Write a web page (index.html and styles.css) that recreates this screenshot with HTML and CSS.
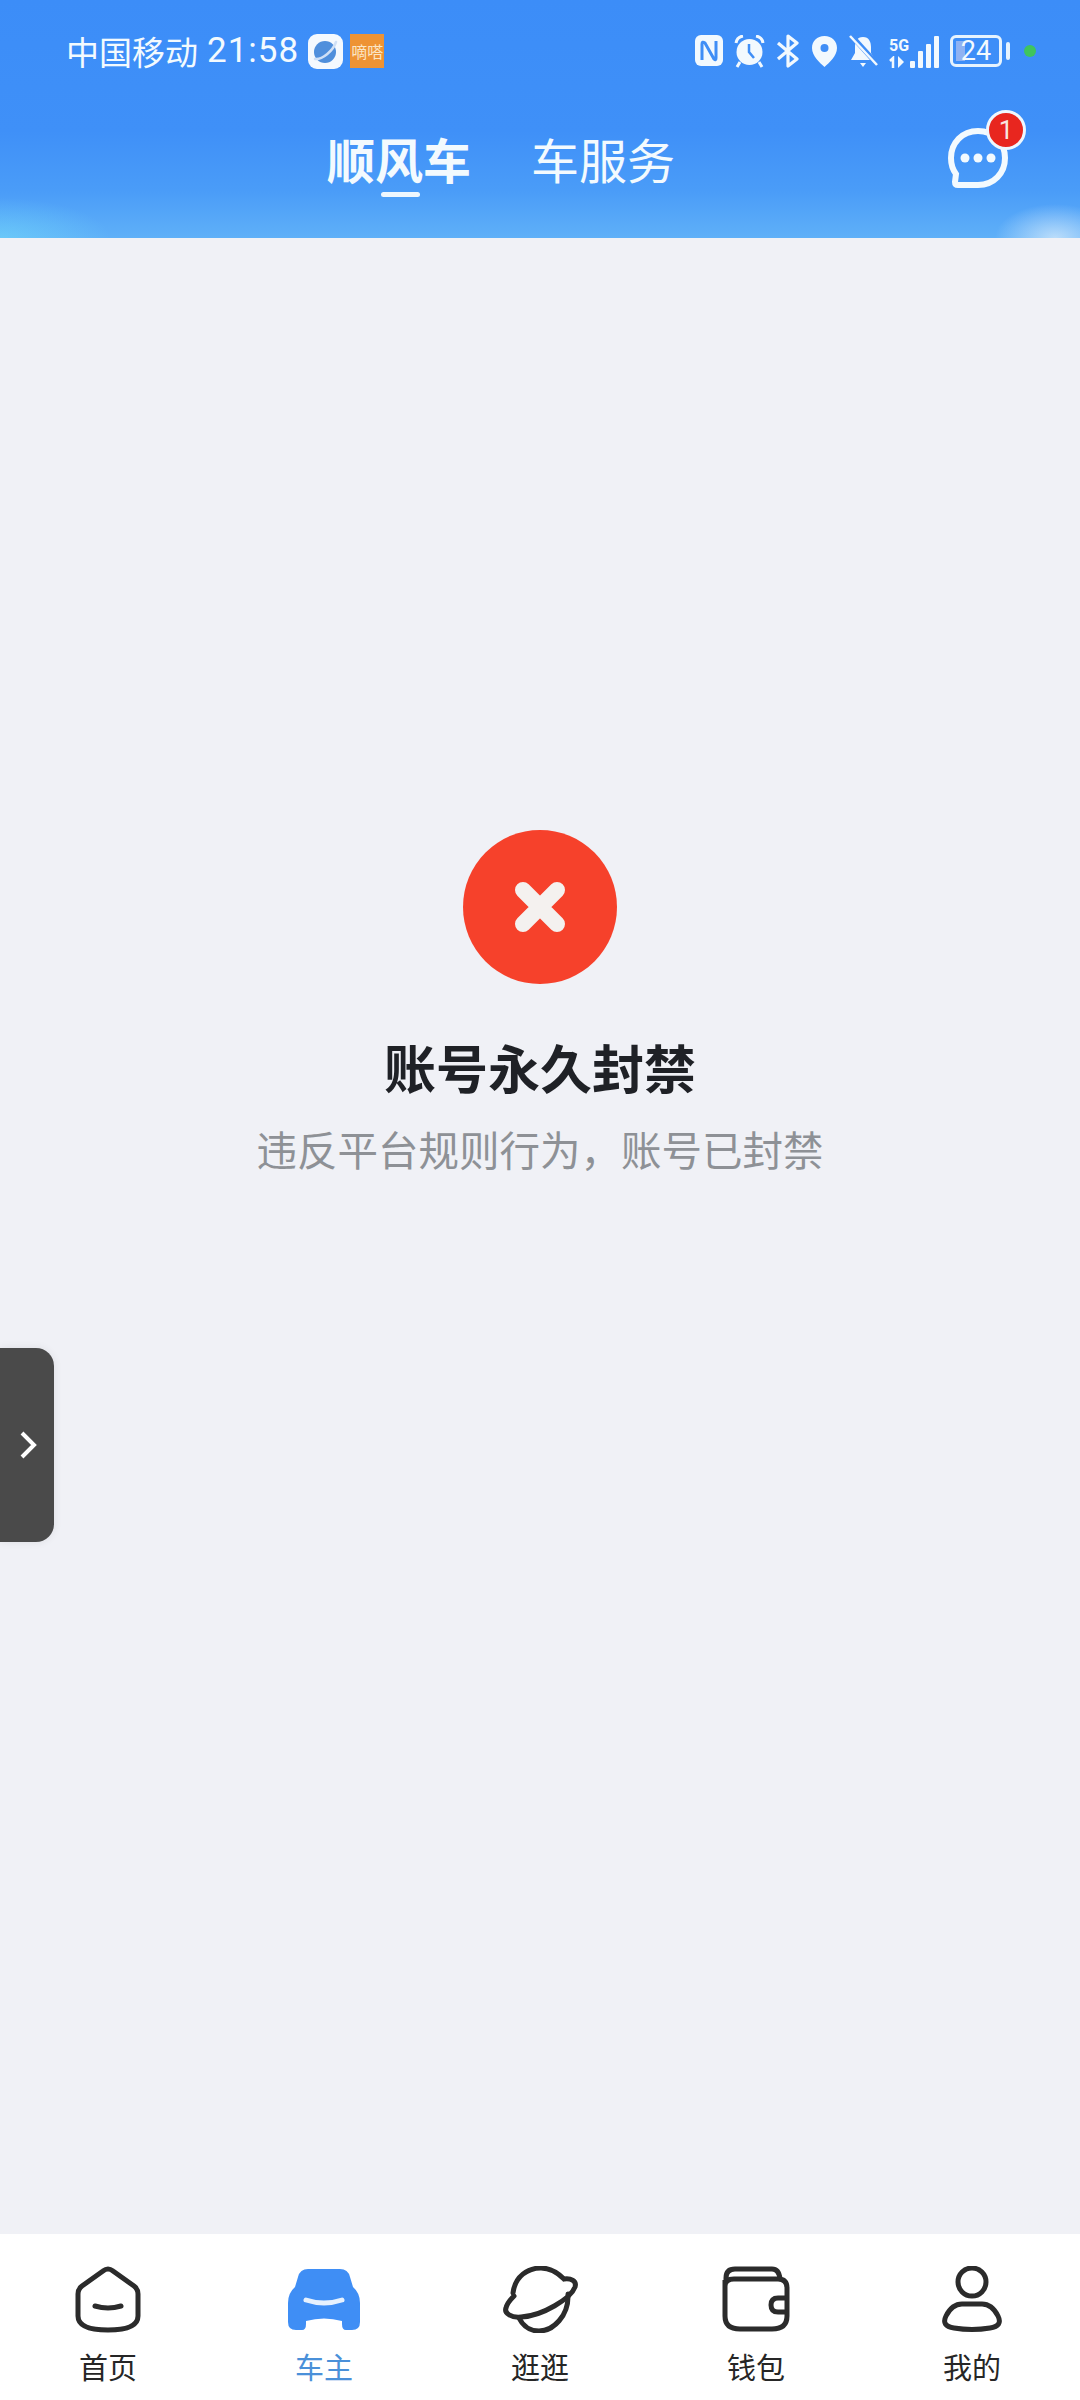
FILE: index.html
```html
<!DOCTYPE html>
<html lang="zh-CN">
<head>
    <meta charset="UTF-8">
    <title>账号永久封禁</title>
    <link rel="stylesheet" href="styles.css">
</head>
<body>
<div class="app">

    <!-- Header with status bar and tabs -->
    <header class="top">
        <div class="status-bar">
            <div class="status-left">
                <span class="carrier">中国移动</span>
                <span class="clock">21:58</span>
                <svg class="app-planet" width="35" height="35" viewBox="0 0 35 35">
                    <rect width="35" height="35" rx="9" fill="#f4f9fe"/>
                    <circle cx="17" cy="18" r="11" fill="#4f8fdc"/>
                    <path d="M7 25 C14 26 25 17 28 8" fill="none" stroke="#cfe0f6" stroke-width="2.5" stroke-linecap="round"/>
                </svg>
                <span class="app-dida">嘀嗒</span>
            </div>
            <div class="status-right">
                <svg width="28" height="32" viewBox="0 0 28 32">
                    <rect width="28" height="31" rx="6" fill="#f2f9fe"/>
                    <path d="M7 25 V9 Q7 6 10 8 L19 24 Q21 26 21 23 V6" fill="none" stroke="#3f8ef6" stroke-width="3"/>
                </svg>
                <svg width="31" height="33" viewBox="0 0 31 33">
                    <circle cx="15.500" cy="17" r="13" fill="#f2f9fe"/>
                    <path d="M2 8 Q3 2 9 1 M29 8 Q28 2 22 1 M6 27 L3 32 M25 27 L28 32" fill="none" stroke="#f2f9fe" stroke-width="3"/>
                    <path d="M15 9 V17 L20 23" fill="none" stroke="#3f8ef6" stroke-width="2.500"/>
                </svg>
                <svg width="24" height="34" viewBox="0 0 24 34">
                    <path d="M2 9 L21 25 L12 32 V2 L21 9 L2 25" fill="none" stroke="#f2f9fe" stroke-width="3.200" stroke-linejoin="round"/>
                </svg>
                <svg width="27" height="32" viewBox="0 0 27 32">
                    <path d="M13.500 1 C6 1 1 6 1 13 C1 21 9 28 13.500 32 C18 28 26 21 26 13 C26 6 21 1 13.500 1Z" fill="#f2f9fe"/>
                    <circle cx="13.500" cy="13" r="4" fill="#3f8ef6"/>
                </svg>
                <svg width="29" height="34" viewBox="0 0 29 34">
                    <path d="M14 3 C8 3 6 8 6 13 V19 L2 26 H26 L22 19 V13 C22 8 20 3 14 3Z" fill="#f2f9fe"/>
                    <path d="M11 29 H17 L14 33Z" fill="#f2f9fe"/>
                    <path d="M1 0 L28 30" stroke="#3f8ef6" stroke-width="5"/>
                    <path d="M1 2 L28 31" stroke="#f2f9fe" stroke-width="2.500"/>
                </svg>
                <div class="signal">
                    <div class="net">
                        <span class="net-label">5G</span>
                        <svg width="18" height="12" viewBox="0 0 18 12">
                            <path d="M4 12 V2 L1 5" fill="none" stroke="#f2f9fe" stroke-width="2.500"/>
                            <path d="M9 0 L15 6 L9 12Z" fill="#f2f9fe"/>
                        </svg>
                    </div>
                    <div class="bars">
                        <i class="bar b1"></i><i class="bar b2"></i><i class="bar b3"></i><i class="bar b4"></i>
                    </div>
                </div>
                <div class="battery">
                    <div class="battery-body">
                        <i class="battery-fill"></i>
                        <span class="battery-num">24</span>
                    </div>
                    <i class="battery-nub"></i>
                </div>
                <i class="green-dot"></i>
            </div>
        </div>

        <div class="nav-row">
            <div class="tab tab-active">顺风车</div>
            <div class="tab">车服务</div>
            <div class="msg">
                <svg width="60" height="60" viewBox="0 0 60 60">
                    <path d="M30 3 C14 3 3 15 3 30 C3 37 5 42 8 46 L7 54 Q7 57 10 57 H30 C46 57 57 45 57 30 C57 15 46 3 30 3Z" fill="none" stroke="#f3fafe" stroke-width="6"/>
                    <circle cx="17" cy="30" r="4.500" fill="#f3fafe"/>
                    <circle cx="30" cy="30" r="4.500" fill="#f3fafe"/>
                    <circle cx="43" cy="30" r="4.500" fill="#f3fafe"/>
                </svg>
                <span class="badge">1</span>
            </div>
        </div>
    </header>

    <!-- Banned notice -->
    <main class="content">
        <svg class="ban-icon" width="154" height="154" viewBox="0 0 154 154">
            <circle cx="77" cy="77" r="77" fill="#f6412b"/>
            <path d="M60 60 L94 94 M94 60 L60 94" stroke="#f4f1ef" stroke-width="16" stroke-linecap="round"/>
        </svg>
        <h1 class="ban-title">账号永久封禁</h1>
        <p class="ban-desc">违反平台规则行为，账号已封禁</p>
    </main>

    <!-- Floating side handle -->
    <div class="side-handle">
        <svg width="18" height="30" viewBox="0 0 18 30">
            <path d="M3 3 L15 15 L3 27" fill="none" stroke="#fff" stroke-width="4"/>
        </svg>
    </div>

    <!-- Bottom navigation -->
    <nav class="bottom-nav">
        <div class="nav-item">
            <svg width="66" height="67" viewBox="0 0 66 67">
                <path d="M28 5 L7 20 Q3 23 3 28 V50 Q3 64 33 64 Q63 64 63 50 V28 Q63 23 59 20 L38 5 Q33 1 28 5Z" fill="none" stroke="#2b2b2b" stroke-width="5"/>
                <path d="M20 40 Q33 44 46 40" fill="none" stroke="#2b2b2b" stroke-width="5" stroke-linecap="round"/>
            </svg>
            <span>首页</span>
        </div>
        <div class="nav-item nav-active">
            <svg width="72" height="67" viewBox="0 -3 72 67">
                <path d="M20 0 H52 Q60 0 62 8 L65 18 Q72 24 72 34 V53 Q72 61 64 61 H58 Q54 61 54 55 V52 Q36 47 18 52 V55 Q18 61 14 61 H8 Q0 61 0 53 V34 Q0 24 7 18 L10 8 Q12 0 20 0Z" fill="#3f8ef5"/>
                <path d="M18 31 Q36 37 54 31" fill="none" stroke="#e6f1fe" stroke-width="5" stroke-linecap="round"/>
            </svg>
            <span>车主</span>
        </div>
        <div class="nav-item">
            <svg width="75" height="67" viewBox="0 0 75 67">
                <path d="M10 27 C12 10 25 2 38 2 C47 2 55 7 61 13 C68 12 74 15 72 21 C68 32 40 50 18 51 C8 52 1 47 3 42 C4 37 8 33 11 30" fill="none" stroke="#2b2b2b" stroke-width="5" stroke-linecap="round"/>
                <path d="M65 28 C66 50 50 65 36 65 C27 65 20 60 16 52" fill="none" stroke="#2b2b2b" stroke-width="5" stroke-linecap="round"/>
            </svg>
            <span>逛逛</span>
        </div>
        <div class="nav-item">
            <svg width="68" height="67" viewBox="0 0 68 67">
                <path d="M4 16 V12 Q4 3 13 3 H50 Q57 3 58 13" fill="none" stroke="#2b2b2b" stroke-width="5"/>
                <path d="M3 14 V50 Q3 63 18 63 H50 Q65 63 65 50 V22 Q65 13 56 13 H12 Q3 13 3 20" fill="none" stroke="#2b2b2b" stroke-width="5"/>
                <path d="M65 32 H56 Q49 32 49 39 Q49 46 56 46 H65" fill="none" stroke="#2b2b2b" stroke-width="5"/>
            </svg>
            <span>钱包</span>
        </div>
        <div class="nav-item">
            <svg width="64" height="67" viewBox="0 0 64 67">
                <circle cx="32" cy="16" r="14" fill="none" stroke="#2b2b2b" stroke-width="5"/>
                <path d="M22 38 H42 Q52 38 58 50 Q63 60 50 62 Q32 65 14 62 Q1 60 6 50 Q12 38 22 38Z" fill="none" stroke="#2b2b2b" stroke-width="5"/>
            </svg>
            <span>我的</span>
        </div>
    </nav>

</div>
</body>
</html>
```

FILE: styles.css
```css
/* Global Styles */
* {
    margin: 0;
    padding: 0;
    box-sizing: border-box;
}

body {
    font-family: "Noto Sans CJK SC", "Noto Sans", sans-serif;
    background-color: #f0f1f6;
}

.app {
    position: relative;
    display: flex;
    flex-direction: column;
    width: 1080px;
    height: 2400px;
    overflow: hidden;
}

svg {
    display: block;
    flex-shrink: 0;
}

/* Header */
.top {
    height: 238px;
    padding-top: 34px;
    color: #f3fafe;
    background:
        radial-gradient(ellipse 110px 40px at 0 100%, rgba(120, 230, 250, 0.45), transparent),
        radial-gradient(ellipse 60px 34px at 1055px 100%, rgba(225, 240, 252, 0.7), transparent),
        linear-gradient(#3c8df8 0, #3f90f8 55%, #4a9cf8 80%, #5fb0f8 100%);
}

.status-bar {
    display: flex;
    justify-content: space-between;
    align-items: center;
    height: 34px;
    padding: 0 44px 0 66px;
}

.status-left {
    display: flex;
    align-items: center;
}

.carrier {
    font-size: 33px;
    line-height: 34px;
}

.clock {
    margin-left: 9px;
    font-family: "Roboto", sans-serif;
    font-size: 35px;
    line-height: 34px;
    letter-spacing: 1px;
}

.app-planet {
    margin-left: 9px;
}

.app-dida {
    width: 34px;
    height: 34px;
    margin-left: 7px;
    background-color: #ee9334;
    color: #fbe6c6;
    font-size: 16px;
    line-height: 34px;
    text-align: center;
    white-space: nowrap;
}

.status-right {
    display: flex;
    align-items: center;
    gap: 11px;
}

.signal {
    display: flex;
    align-items: flex-end;
    gap: 3px;
    height: 34px;
}

.net {
    display: flex;
    flex-direction: column;
    justify-content: flex-end;
    gap: 2px;
    width: 18px;
}

.net-label {
    font-family: "Roboto", sans-serif;
    font-size: 16px;
    font-weight: 700;
    line-height: 16px;
}

.bars {
    display: flex;
    align-items: flex-end;
    gap: 3px;
}

.bar {
    display: block;
    width: 5px;
    border-radius: 1px;
    background-color: #f2f9fe;
}

.b1 { height: 7px; }
.b2 { height: 17px; }
.b3 { height: 24px; }
.b4 { height: 32px; }

.battery {
    display: flex;
    align-items: center;
    gap: 4px;
}

.battery-body {
    position: relative;
    width: 52px;
    height: 32px;
    border: 3px solid #e6f3fe;
    border-radius: 6px;
    text-align: center;
}

.battery-fill {
    position: absolute;
    left: 3px;
    top: 3px;
    bottom: 3px;
    width: 9px;
    background-color: #8fb2f2;
}

.battery-num {
    position: relative;
    display: block;
    font-family: "Roboto", sans-serif;
    font-size: 27px;
    line-height: 26px;
}

.battery-nub {
    display: block;
    width: 4px;
    height: 18px;
    border-radius: 2px;
    background-color: #e6f3fe;
}

.green-dot {
    display: block;
    width: 12px;
    height: 12px;
    margin-left: 3px;
    border-radius: 50%;
    background-color: #3fc45e;
}

/* Tabs */
.nav-row {
    display: flex;
    align-items: center;
    height: 60px;
    margin-top: 60px;
    padding-left: 327px;
}

.tab {
    font-size: 48px;
    line-height: 60px;
    margin-right: 60px;
}

.tab-active {
    position: relative;
    font-weight: 700;
}

.tab-active::after {
    content: "";
    position: absolute;
    left: 54px;
    bottom: -9px;
    width: 39px;
    height: 5px;
    border-radius: 3px;
    background-color: #eef7fe;
}

.msg {
    position: relative;
    margin-left: auto;
    margin-right: 72px;
}

.badge {
    position: absolute;
    top: -18px;
    right: -18px;
    width: 40px;
    height: 40px;
    border: 3px solid #eef7fe;
    border-radius: 50%;
    background-color: #e8261f;
    color: #f8e6e0;
    font-family: "Roboto", sans-serif;
    font-size: 26px;
    line-height: 34px;
    text-align: center;
}

/* Notice */
.content {
    flex: 1;
    display: flex;
    flex-direction: column;
    align-items: center;
    padding-top: 592px;
}

.ban-title {
    margin-top: 48px;
    color: #1f2126;
    font-size: 52px;
    font-weight: 700;
    line-height: 70px;
}

.ban-desc {
    margin-top: 19px;
    color: #8e9196;
    font-size: 40.500px;
    line-height: 56px;
}

/* Side handle */
.side-handle {
    position: absolute;
    left: 0;
    top: 1348px;
    display: flex;
    align-items: center;
    justify-content: flex-end;
    width: 54px;
    height: 194px;
    padding-right: 17px;
    border-radius: 0 18px 18px 0;
    background-color: #4a4a4a;
    box-shadow: 0 0 8px rgba(0, 0, 0, 0.08);
}

/* Bottom navigation */
.bottom-nav {
    display: flex;
    height: 166px;
    padding-top: 32px;
    background-color: #fff;
}

.nav-item {
    flex: 1;
    display: flex;
    flex-direction: column;
    align-items: center;
    color: #262626;
    font-size: 29px;
    line-height: 40px;
}

.nav-item span {
    margin-top: 13px;
}

.nav-active {
    color: #4a90d9;
}
```
